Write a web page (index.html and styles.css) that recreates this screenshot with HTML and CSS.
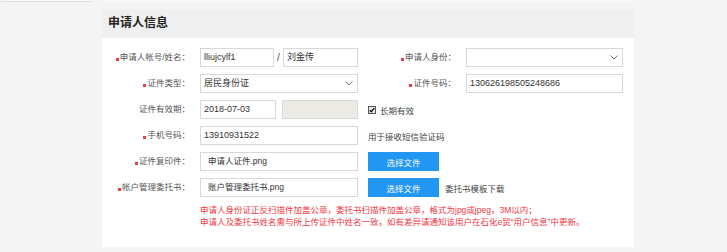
FILE: index.html
```html
<!DOCTYPE html>
<html lang="zh-CN">
<head>
  <meta charset="utf-8">
  <title>申请人信息</title>
  <link rel="stylesheet" href="styles.css">
</head>
<body>
<div class="topbar">
  <div class="tab"></div>
  <div class="strip"></div>
</div>

<div class="panel">
  <div class="panel-head">申请人信息</div>

  <div class="form">
    <label class="lbl"><i class="req"></i>申请人帐号/姓名：</label>
    <div class="pair">
      <div class="ipt w74">lliujcylf1</div>
      <span class="slash">/</span>
      <div class="ipt w75">刘金传</div>
    </div>
    <label class="lbl"><i class="req"></i>申请人身份：</label>
    <div class="ipt sel">
      <span></span>
      <svg class="arrow" width="8" height="5" viewBox="0 0 8 5"><path d="M0.5 0.5 L4 4 L7.5 0.5" fill="none" stroke="#777" stroke-width="1"/></svg>
    </div>

    <label class="lbl"><i class="req"></i>证件类型：</label>
    <div class="ipt sel">
      <span>居民身份证</span>
      <svg class="arrow" width="8" height="5" viewBox="0 0 8 5"><path d="M0.5 0.5 L4 4 L7.5 0.5" fill="none" stroke="#777" stroke-width="1"/></svg>
    </div>
    <label class="lbl"><i class="req"></i>证件号码：</label>
    <div class="ipt">130626198505248686</div>

    <label class="lbl">证件有效期：</label>
    <div class="pair gap6">
      <div class="ipt w76">2018-07-03</div>
      <div class="ipt w76 off"></div>
    </div>
    <div class="extra">
      <span class="chk">
        <svg width="8" height="8" viewBox="0 0 8 8"><rect x="0.5" y="0.5" width="7" height="7" fill="#e8e8e8" stroke="#555"/><path d="M1.8 4.2 L3.3 5.7 L6.3 2.2" fill="none" stroke="#111" stroke-width="1.3"/></svg>
      </span>
      <span>长期有效</span>
    </div>

    <label class="lbl"><i class="req"></i>手机号码：</label>
    <div class="ipt">13910931522</div>
    <div class="extra">用于接收短信验证码</div>

    <label class="lbl"><i class="req"></i>证件复印件：</label>
    <div class="ipt file">申请人证件.png</div>
    <div class="extra">
      <button class="btn" type="button">选择文件</button>
    </div>

    <label class="lbl"><i class="req"></i>帐户管理委托书：</label>
    <div class="ipt file">账户管理委托书.png</div>
    <div class="extra">
      <button class="btn" type="button">选择文件</button>
      <span class="link">委托书模板下载</span>
    </div>
  </div>

  <div class="notes">
    <p>申请人身份证正反扫描件加盖公章，委托书扫描件加盖公章，格式为jpg或jpeg，3M以内；</p>
    <p>申请人及委托书姓名需与所上传证件中姓名一致，如有差异请通知该用户在石化e贸“用户信息”中更新。</p>
  </div>
</div>
</body>
</html>
```

FILE: styles.css
```css
body{
  margin:0;
  background:#f4f4f4;
  font-family:"Liberation Sans","Noto Sans CJK SC",sans-serif;
  color:#333;
}

.topbar{
  display:flex;
  height:9px;
}

.tab{
  width:90px;
  height:1px;
  background:#f9f9f9;
  border:1px solid #dedede;
  border-top:0;
  border-radius:0 0 2px 2px;
}

.strip{
  margin-left:11px;
  width:532px;
  height:2px;
  background:#f8f8f8;
}

.panel{
  margin-left:102px;
  width:532px;
  height:238px;
  background:#fff;
}

.panel-head{
  height:29px;
  line-height:29px;
  padding-left:6px;
  background:#efefef;
  font-size:12px;
  font-weight:bold;
  color:#222;
}

.form{
  display:grid;
  grid-template-columns:88px 158px 88px 157px;
  grid-auto-rows:19px;
  column-gap:10px;
  row-gap:7px;
  padding-top:10px;
}

.lbl{
  text-align:right;
  line-height:19px;
  font-size:8.5px;
  color:#555;
  white-space:nowrap;
}

.req{
  display:inline-block;
  width:3px;
  height:3px;
  margin-right:1px;
  background:#f03a4a;
  vertical-align:-1px;
}

.ipt{
  box-sizing:border-box;
  height:19px;
  line-height:17px;
  padding-left:3px;
  border:1px solid #d8d8d8;
  background:#fff;
  font-size:9px;
  color:#333;
  white-space:nowrap;
  overflow:hidden;
}

.pair{
  display:flex;
  align-items:center;
}

.gap6{
  gap:6px;
}

.w74{ width:74px; }
.w75{ width:75px; }
.w76{ width:76px; }

.slash{
  width:9px;
  text-align:center;
  font-size:10px;
  color:#444;
}

.off{
  background:#ebeae4;
}

.sel{
  display:flex;
  align-items:center;
  justify-content:space-between;
  padding-right:4px;
}

.file{
  padding-left:7px;
  font-size:8.5px;
}

.extra{
  grid-column:3 / 5;
  display:flex;
  align-items:center;
  font-size:8.5px;
  color:#444;
}

.chk{
  display:flex;
  margin-right:4px;
}

.btn{
  width:71px;
  height:19px;
  border:0;
  background:#2196f3;
  color:#fff;
  font-family:inherit;
  font-size:8.5px;
  padding:0;
}

.link{
  margin-left:6px;
}

.notes{
  margin:7px 0 0 98px;
  font-size:8.5px;
  color:#f2363f;
}

.notes p{
  margin:0;
  line-height:12px;
}
```
